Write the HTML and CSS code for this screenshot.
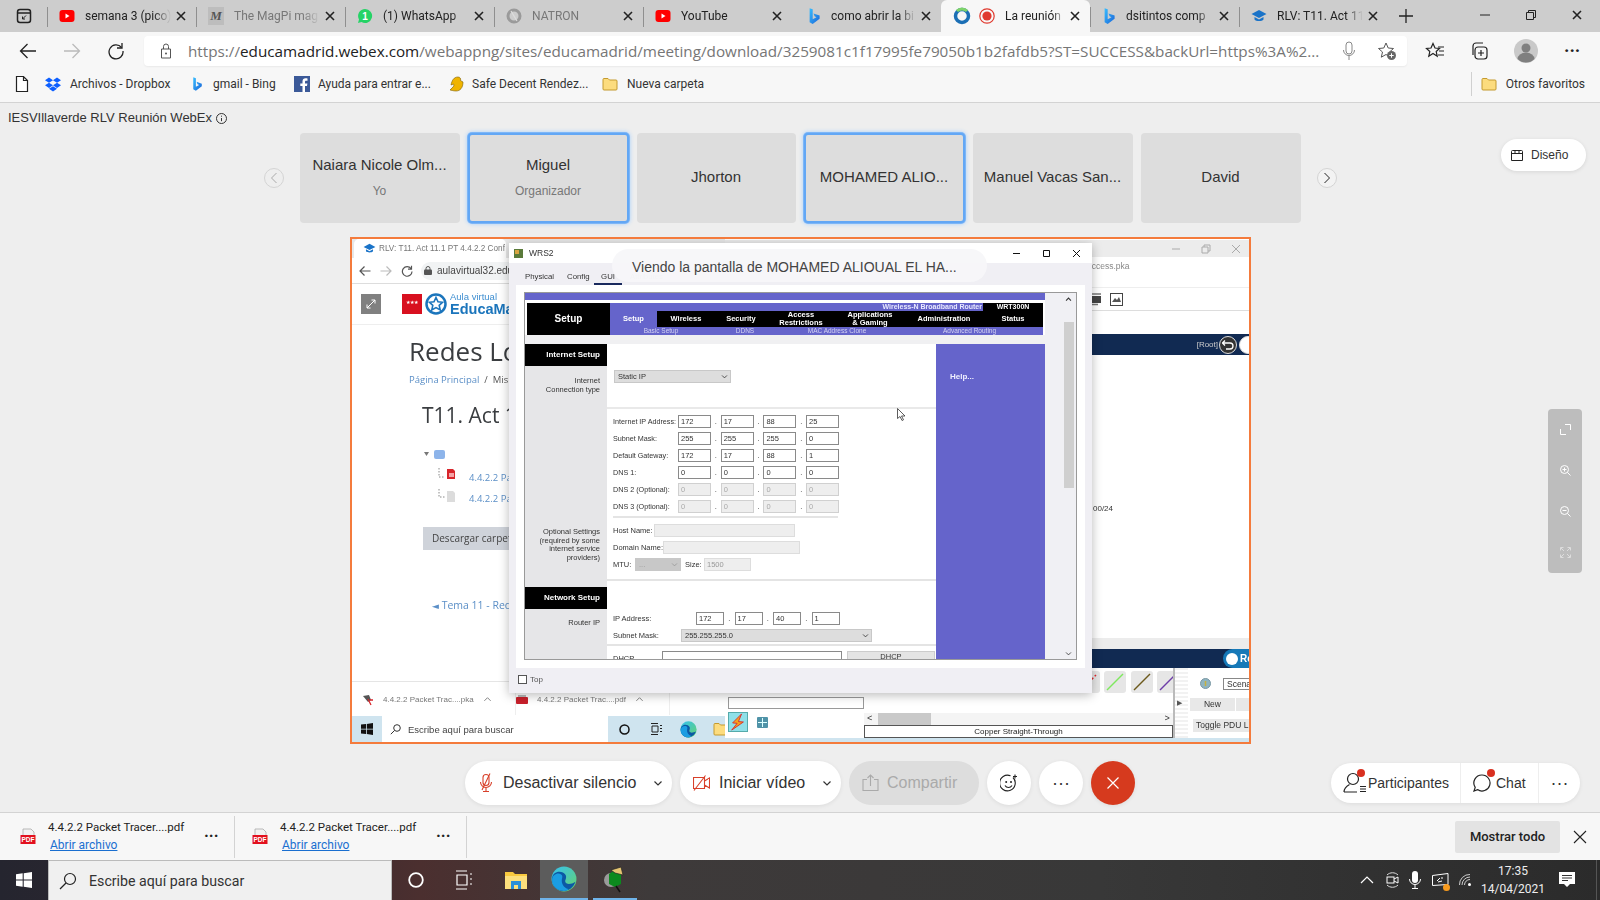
FILE: index.html
```html
<!DOCTYPE html>
<html lang="es">
<head>
<meta charset="utf-8">
<title>La reunión</title>
<link rel="stylesheet" href="styles.css">
</head>
<body>
<svg class="defs" width="0" height="0">
  <defs>
    <symbol id="x" viewBox="0 0 12 12"><path d="M2 2l8 8M10 2l-8 8" fill="none" stroke="currentColor" stroke-width="1.6"/></symbol>
    <symbol id="yt" viewBox="0 0 16 16"><rect x="0.5" y="2" width="15" height="12" rx="3" fill="#f00"/><path d="M6.5 5.5v5l4-2.5z" fill="#fff"/></symbol>
    <symbol id="bing" viewBox="0 0 16 18"><defs><linearGradient id="bg" x1="0" y1="0" x2="1" y2="1"><stop offset="0" stop-color="#37bdff"/><stop offset="1" stop-color="#1b66d8"/></linearGradient></defs><path d="M3 0l3.500 1.300v11.500l4.300-2.500-2.100-1-1.300-3.300 7 2.500v3.600L6.500 18 3 16z" fill="url(#bg)"/></symbol>
    <symbol id="folder" viewBox="0 0 16 16"><path d="M1 3.500a1 1 0 011-1h4l1.500 1.500H14a1 1 0 011 1V13a1 1 0 01-1 1H2a1 1 0 01-1-1z" fill="#fcdc7e" stroke="#c49a2e"/></symbol>
    <symbol id="pdf" viewBox="0 0 16 18"><path d="M3 1h8l3 3v4H3z" fill="#f2f2f2" stroke="#aaa" stroke-width=".8"/><rect x="0.500" y="7" width="15" height="9" fill="#e2101e"/><text x="8" y="14" font-size="6.500" font-weight="700" text-anchor="middle" fill="#fff" font-family="Liberation Sans">PDF</text></symbol>
    <symbol id="chev" viewBox="0 0 10 10"><path d="M1.500 3.500L5 7l3.500-3.500" fill="none" stroke="currentColor" stroke-width="1.200"/></symbol>
    <symbol id="cap" viewBox="0 0 16 14"><path d="M8 1L0.500 5 8 9l7.500-4z" fill="#1a73c8"/><path d="M3.500 8v2.500C5 12.500 11 12.500 12.500 10.500V8L8 10.500z" fill="#1a73c8"/></symbol>
    <symbol id="edge" viewBox="0 0 24 24"><defs><linearGradient id="eg1" x1="0" y1="0" x2="1" y2="1"><stop offset="0" stop-color="#35c1f1"/><stop offset="1" stop-color="#66d36e"/></linearGradient></defs><circle cx="12" cy="12" r="11.500" fill="url(#eg1)"/><path d="M1 12C1 6 7 4 11 6c3 1.500 3.500 4 2.500 6.500-1 2 0 4 3 4 2 0 4-.5 6-2-1.500 5-6 8.500-11 8.500C5 23 1 18 1 12z" fill="#0c59a4"/><path d="M1 13c0-5 5-7 8-5.500 2 1 1.500 3 1 5-.5 3.500 1.500 7.500 6 8.800C14.800 22.700 13.500 23 12 23 5 23 1 18 1 13z" fill="#1b9de2"/></symbol>
  </defs>
</svg>

<header class="tabstrip">
  <div class="tabs-switch">
    <svg width="16" height="16" viewBox="0 0 16 16"><rect x="1.500" y="1.500" width="13" height="13" rx="2.500" fill="none" stroke="#222" stroke-width="1.500"/><path d="M1.500 5h13" stroke="#222" stroke-width="1.500"/><path d="M10 7.500L6.500 11m0-2.500V11H9" fill="none" stroke="#222"/></svg>
  </div>
  <div class="tab sep"><svg class="fav" width="16" height="16"><use href="#yt"/></svg><span class="tab-text">semana 3 (pico)</span><svg class="tab-x" width="12" height="12"><use href="#x"/></svg></div>
  <div class="tab sep"><span class="fav fav-m">M</span><span class="tab-text muted">The MagPi mag</span><svg class="tab-x" width="12" height="12"><use href="#x"/></svg></div>
  <div class="tab sep"><svg class="fav" width="16" height="16" viewBox="0 0 16 16"><path d="M8 1a7 7 0 00-6 10.500L1 15l3.500-1A7 7 0 108 1z" fill="#25d366"/><text x="8" y="12" font-size="10" font-weight="700" text-anchor="middle" fill="#fff" font-family="Liberation Sans">1</text></svg><span class="tab-text">(1) WhatsApp</span><svg class="tab-x" width="12" height="12"><use href="#x"/></svg></div>
  <div class="tab sep"><svg class="fav" width="16" height="16" viewBox="0 0 16 16"><circle cx="8" cy="8" r="6" fill="none" stroke="#9a9a9a" stroke-width="3"/><path d="M5 3l6 10" stroke="#ddd" stroke-width="1.200"/></svg><span class="tab-text muted">NATRON</span><svg class="tab-x" width="12" height="12"><use href="#x"/></svg></div>
  <div class="tab sep"><svg class="fav" width="16" height="16"><use href="#yt"/></svg><span class="tab-text">YouTube</span><svg class="tab-x" width="12" height="12"><use href="#x"/></svg></div>
  <div class="tab"><svg class="fav" width="14" height="16"><use href="#bing"/></svg><span class="tab-text">como abrir la bi</span><svg class="tab-x" width="12" height="12"><use href="#x"/></svg></div>
  <div class="tab active">
    <svg class="fav fav-wx" width="18" height="18" viewBox="0 0 18 18"><circle cx="9" cy="9" r="6.500" fill="none" stroke="#1b6fb5" stroke-width="3.500"/><path d="M4 4a7 7 0 0110 0" fill="none" stroke="#7ed36a" stroke-width="3"/></svg>
    <svg class="fav" width="16" height="16" viewBox="0 0 16 16"><circle cx="8" cy="8" r="7.200" fill="none" stroke="#e0392e" stroke-width="1.200"/><circle cx="8" cy="8" r="4.600" fill="#e0392e"/></svg>
    <span class="tab-text">La reunión</span><svg class="tab-x" width="12" height="12"><use href="#x"/></svg>
  </div>
  <div class="tab sep"><svg class="fav" width="14" height="16"><use href="#bing"/></svg><span class="tab-text">dsitintos comp</span><svg class="tab-x" width="12" height="12"><use href="#x"/></svg></div>
  <div class="tab sep"><svg class="fav" width="16" height="14"><use href="#cap"/></svg><span class="tab-text">RLV: T11. Act 11</span><svg class="tab-x" width="12" height="12"><use href="#x"/></svg></div>
  <svg class="newtab" width="16" height="16" viewBox="0 0 16 16"><path d="M8 1v14M1 8h14" stroke="#222" stroke-width="1.300"/></svg>
  <div class="winctl">
    <svg width="12" height="12" viewBox="0 0 12 12"><path d="M1 6h10" stroke="#222"/></svg>
    <svg width="12" height="12" viewBox="0 0 12 12"><path d="M1.500 3.500h7v7h-7zM3.500 3.500v-2h7v7h-2" fill="none" stroke="#222"/></svg>
    <svg class="winctl-x" width="12" height="12"><use href="#x"/></svg>
  </div>
</header>

<nav class="toolbar">
  <svg class="tb-back" width="18" height="18" viewBox="0 0 18 18"><path d="M17 9H1.500M8.500 2L1.500 9l7 7" fill="none" stroke="#222" stroke-width="1.300"/></svg>
  <svg class="tb-fwd" width="18" height="18" viewBox="0 0 18 18"><path d="M1 9h15.500M9.500 2l7 7-7 7" fill="none" stroke="#bbb" stroke-width="1.300"/></svg>
  <svg class="tb-reload" width="18" height="18" viewBox="0 0 18 18"><path d="M14.500 5.500A7 7 0 1016 9" fill="none" stroke="#222" stroke-width="1.300"/><path d="M15 1v5h-5" fill="none" stroke="#222" stroke-width="1.300"/></svg>
  <div class="omni">
    <svg class="lock" width="12" height="16" viewBox="0 0 12 16"><path d="M3.500 6V3.500a2.500 2.500 0 015 0V6M1.500 6h9v9h-9z" fill="none" stroke="#555"/><circle cx="6" cy="10.500" r="1" fill="#555"/></svg>
    <div class="url"><span class="url-g">https://</span><span class="url-d">educamadrid.webex.com</span><span class="url-g">/webappng/sites/educamadrid/meeting/download/3259081c1f17995fe79050b1b2fafdb5?ST=SUCCESS&amp;backUrl=https%3A%2...</span></div>
    <svg class="omni-mic" width="14" height="20" viewBox="0 0 14 20"><rect x="4" y="1" width="6" height="12" rx="3" fill="none" stroke="#888"/><path d="M1.500 9a5.500 5.500 0 0011 0M7 14.500V19" fill="none" stroke="#888"/></svg>
    <svg class="omni-star" width="20" height="20" viewBox="0 0 20 20"><path d="M9 2l2.200 5 5.300.5-4 3.500 1.200 5.200L9 13.500l-4.700 2.700L5.500 11l-4-3.500L6.800 7z" fill="none" stroke="#555"/><circle cx="14.500" cy="14.500" r="4.500" fill="#666"/><path d="M14.500 12.300v4.400M12.300 14.500h4.400" stroke="#fff"/></svg>
  </div>
  <svg class="tb-fav" width="20" height="20" viewBox="0 0 20 20"><path d="M8 2.500l2 4.500 4.500.5-3.300 3 1 4.800L8 12.500l-4.200 2.800 1-4.800-3.300-3L6 7z" fill="none" stroke="#222" stroke-width="1.200"/><path d="M13 6h6M14 10h5M13 14h6" stroke="#222" stroke-width="1.200"/></svg>
  <svg class="tb-col" width="20" height="20" viewBox="0 0 20 20"><rect x="6" y="6" width="12" height="12" rx="3" fill="none" stroke="#222" stroke-width="1.200"/><path d="M12 9v6M9 12h6" stroke="#222" stroke-width="1.200"/><path d="M4 14V5a3 3 0 013-3h7" fill="none" stroke="#222" stroke-width="1.200"/></svg>
  <svg class="tb-avatar" width="24" height="24" viewBox="0 0 24 24"><circle cx="12" cy="12" r="12" fill="#c9c9c9"/><circle cx="12" cy="9" r="4.500" fill="#7f7f7f"/><path d="M3.500 20a8.500 6.500 0 0117 0 12 12 0 01-17 0z" fill="#7f7f7f"/></svg>
  <span class="tb-dots">···</span>
</nav>

<nav class="bookmarks">
  <svg class="bm-doc" width="14" height="18" viewBox="0 0 14 18"><path d="M1.500 1.500h7l4 4v11h-11zM8.500 1.500v4h4" fill="#fff" stroke="#222" stroke-width="1.200"/></svg>
  <div class="bm bm-1"><svg width="16" height="15" viewBox="0 0 16 15"><path d="M4 0.500L0 3.200l4 2.600 4-2.600zM12 0.500L8 3.200l4 2.600 4-2.600zM0 8.300l4 2.600 4-2.600-4-2.500zM12 5.800L8 8.300l4 2.600 4-2.600zM4 11.800l4 2.700 4-2.700-4-2.600z" fill="#0d5fff"/></svg><span>Archivos - Dropbox</span></div>
  <div class="bm bm-2"><svg width="12" height="16"><use href="#bing"/></svg><span>gmail - Bing</span></div>
  <div class="bm bm-3"><svg width="16" height="16" viewBox="0 0 16 16"><rect width="16" height="16" fill="#3b5998"/><path d="M11 16v-6h2l.4-2.500H11V6c0-.8.300-1.200 1.200-1.200h1.300V2.500C13 2.400 12.300 2.300 11.600 2.300 9.700 2.300 8.500 3.400 8.500 5.500v2H6.300V10h2.200v6z" fill="#fff"/></svg><span>Ayuda para entrar e...</span></div>
  <div class="bm bm-4"><svg width="16" height="16" viewBox="0 0 16 16"><path d="M9 1c2 0 3 1.500 2.500 3.500L14 6c0 6-3 9-7 9-3 0-5-1-6-1l3-3c1-1 1-2 .5-3L2 9c1-5 3-8 7-8z" fill="#f0b400" stroke="#7a5c00" stroke-width=".6"/></svg><span>Safe Decent Rendez...</span></div>
  <div class="bm bm-5"><svg width="16" height="16"><use href="#folder"/></svg><span>Nueva carpeta</span></div>
  <div class="bm bm-other"><svg width="16" height="16"><use href="#folder"/></svg><span>Otros favoritos</span></div>
</nav>

<main class="main">
  <div class="meeting-title">IESVIllaverde RLV Reunión WebEx
    <svg width="11" height="11" viewBox="0 0 11 11"><circle cx="5.500" cy="5.500" r="5" fill="none" stroke="#333"/><path d="M5.500 5v3.200M5.500 2.700v1" stroke="#333"/></svg>
  </div>

  <section class="strip">
    <button class="arrow arrow-off"><svg width="8" height="12" viewBox="0 0 8 12"><path d="M6.500 1L1.500 6l5 5" fill="none" stroke="#aaa"/></svg></button>
    <div class="cards">
      <div class="card"><div class="card-name">Naiara Nicole Olm...</div><div class="card-role">Yo</div></div>
      <div class="card card-on"><div class="card-name">Miguel</div><div class="card-role">Organizador</div></div>
      <div class="card"><div class="card-name">Jhorton</div></div>
      <div class="card card-on"><div class="card-name">MOHAMED ALIO...</div></div>
      <div class="card"><div class="card-name">Manuel Vacas San...</div></div>
      <div class="card"><div class="card-name">David</div></div>
    </div>
    <button class="arrow"><svg width="8" height="12" viewBox="0 0 8 12"><path d="M1.500 1l5 5-5 5" fill="none" stroke="#222"/></svg></button>
  </section>

  <button class="layout-btn"><svg width="12" height="12" viewBox="0 0 12 12"><path d="M.5 2.500a1 1 0 011-1h9a1 1 0 011 1v9h-11zM.5 4.500h11M4 1.500v3M8 1.500v3" fill="none" stroke="#222"/></svg><span>Diseño</span></button>

  <section class="share">
    <div class="canvas">
      <!-- remote browser -->
      <div class="cw">
        <div class="cw-tabs"><div class="cw-tab"><svg width="13" height="11"><use href="#cap"/></svg><span>RLV: T11. Act 11.1 PT 4.4.2.2 Conf</span></div></div>
        <div class="cw-bar">
          <svg width="12" height="12" viewBox="0 0 12 12"><path d="M11.500 6H1M5.500 1.500L1 6l4.500 4.500" fill="none" stroke="#555" stroke-width="1.200"/></svg>
          <svg width="12" height="12" viewBox="0 0 12 12"><path d="M.5 6H11M6.500 1.500L11 6l-4.500 4.500" fill="none" stroke="#bbb" stroke-width="1.200"/></svg>
          <svg width="12" height="12" viewBox="0 0 12 12"><path d="M10 3.500A4.800 4.800 0 1011 6.500M10.500 .8v3.400H7" fill="none" stroke="#555" stroke-width="1.200"/></svg>
          <div class="cw-omni"><svg width="8" height="9" viewBox="0 0 8 9"><rect y="3.500" width="8" height="5.500" rx="1" fill="#555"/><path d="M2 4V2.500a2 2 0 014 0V4" fill="none" stroke="#555"/></svg><span>aulavirtual32.educa.madrid.org</span></div>
        </div>
        <div class="site-bar">
          <div class="expand"><svg width="10" height="10" viewBox="0 0 10 10"><path d="M1 9l8-8M5.500 1H9v3.500M1 5.500V9h3.500" fill="none" stroke="#fff"/></svg></div>
          <div class="cm-flag"><span>★★★</span></div>
          <svg class="aula-logo" width="22" height="22" viewBox="0 0 22 22"><circle cx="11" cy="11" r="9.500" fill="none" stroke="#1b75bc" stroke-width="2.500"/><path d="M11 4.500l2 4.300 4.500.5-3.300 3 1 4.700-4.200-2.400-4.200 2.400 1-4.700-3.300-3 4.500-.5z" fill="none" stroke="#1b75bc" stroke-width="1.600"/></svg>
          <div class="aula-txt"><span class="aula-a">Aula virtual</span><span class="aula-b">EducaMadrid</span></div>
        </div>
        <div class="site-body">
          <h1 class="site-h1">Redes Locales</h1>
          <div class="crumbs"><span class="link">Página Principal</span> &nbsp;/&nbsp; Mis cursos</div>
          <h2 class="site-h2">T11. Act 11.1 PT</h2>
          <div class="tree-root">
            <svg width="8" height="6" viewBox="0 0 8 6"><path d="M1 1h5L3.500 5z" fill="#777"/></svg>
            <svg width="11" height="9" viewBox="0 0 11 9"><rect width="11" height="9" rx="2" fill="#8db4ea"/></svg>
          </div>
          <div class="tree-file"><svg width="22" height="18" viewBox="0 0 22 18"><path d="M1 0v9h6" fill="none" stroke="#888" stroke-dasharray="1.500 1.500"/><path d="M9 1h6l2 2v8H9z" fill="#d8262c"/><rect x="11" y="5" width="5" height="4" fill="#f4a5a8"/></svg><span class="link">4.4.2.2 Packet Tracer - .pka</span></div>
          <div class="tree-file tree-2"><svg width="22" height="18" viewBox="0 0 22 18"><path d="M1 0v8h6" fill="none" stroke="#888" stroke-dasharray="1.500 1.500"/><path d="M9 2h6l2 2v9H9z" fill="#dcdcdc"/></svg><span class="link">4.4.2.2 Packet Tracer - .pdf</span></div>
          <div class="dl-folder">Descargar carpeta</div>
          <div class="back-link link"><span class="back-arrow">◄</span> Tema 11 - Redes inalámbricas</div>
        </div>
        <div class="cw-dl">
          <div class="cw-dl-item">
            <svg width="12" height="12" viewBox="0 0 12 12"><path d="M1 2l6-1 2 5-3 2z" fill="#555"/><path d="M6 5l3 6M8 6h3" stroke="#d8262c" stroke-width="1.300"/></svg>
            <span>4.4.2.2 Packet Trac....pka</span><svg width="9" height="9" viewBox="0 0 10 10"><path d="M1.500 6.500L5 3l3.500 3.500" fill="none" stroke="#777"/></svg>
          </div>
          <div class="cw-dl-item">
            <svg width="12" height="12" viewBox="0 0 12 12"><rect y="3" width="12" height="7" rx="1" fill="#c8202b"/><rect x="2" y="1" width="8" height="2" fill="#bbb"/></svg>
            <span>4.4.2.2 Packet Trac....pdf</span><svg width="9" height="9" viewBox="0 0 10 10"><path d="M1.500 6.500L5 3l3.500 3.500" fill="none" stroke="#777"/></svg>
          </div>
        </div>
      </div>

      <!-- remote taskbar -->
      <div class="rtask">
        <div class="rtask-start"><svg width="12" height="12" viewBox="0 0 12 12"><path d="M0 1.600L5 1v4.700H0zM5.800.9L12 0v5.700H5.800zM0 6.400h5v4.700l-5-.7zM5.800 6.400H12V12l-6.200-.9z" fill="#111"/></svg></div>
        <div class="rtask-search"><svg width="11" height="11" viewBox="0 0 11 11"><circle cx="7" cy="4" r="3.300" fill="none" stroke="#333"/><path d="M4.500 6.500L.8 10.200" stroke="#333"/></svg><span>Escribe aquí para buscar</span></div>
        <div class="rtask-i"><svg width="11" height="11" viewBox="0 0 11 11"><circle cx="5.500" cy="5.500" r="4.500" fill="none" stroke="#111" stroke-width="1.500"/></svg></div>
        <div class="rtask-i"><svg width="11" height="12" viewBox="0 0 11 12"><path d="M0 .5h7M0 11.500h7M1 3h6v6H1zM9 2.500h2M9 5.500h2M9 8.500h2" fill="none" stroke="#222"/></svg></div>
        <div class="rtask-i"><svg width="17" height="17"><use href="#edge"/></svg></div>
        <div class="rtask-i rtask-folder"><svg width="16" height="16"><use href="#folder"/></svg></div>
      </div>

      <!-- remote packet tracer -->
      <div class="pt">
        <div class="pt-title"><svg width="10" height="10" viewBox="0 0 10 10"><path d="M1 5h8" stroke="#aaa"/></svg><svg width="10" height="10" viewBox="0 0 10 10"><path d="M1 3h6v6H1zM3 3V1h6v6H7" fill="none" stroke="#aaa"/></svg><svg width="10" height="10" viewBox="0 0 10 10"><path d="M1 1l8 8M9 1L1 9" stroke="#aaa"/></svg></div>
        <div class="pt-file"><span>Access.pka</span></div>
        <div class="pt-tools">
          <svg width="13" height="13" viewBox="0 0 13 13"><rect y="3" width="13" height="7" fill="#444"/><path d="M3 1h10M3 11.500h7" stroke="#777" stroke-width="1.500"/></svg>
          <svg width="13" height="13" viewBox="0 0 13 13"><rect x=".5" y=".5" width="12" height="12" fill="#fff" stroke="#444"/><path d="M2 9l3-4 2 2 2-3 2 5z" fill="#555"/></svg>
        </div>
        <div class="pt-gap"></div>
        <div class="pt-nav"><span>[Root]</span><i class="pt-circle"><svg width="12" height="10" viewBox="0 0 12 10"><path d="M3 .5L.5 3 3 5.500M.5 3H8a2.700 2.700 0 010 6H4" fill="none" stroke="#fff" stroke-width="1.300"/></svg></i><i class="pt-circle pt-cloud"></i></div>
        <div class="pt-work"><span>00/24</span></div>
        <div class="pt-band"></div>
        <div class="pt-nav2"><div class="rt-pill"><i></i><span>Re</span></div></div>
        <div class="pt-bottom">
          <div class="pt-left">
            <div class="pt-field"></div>
            <div class="pt-sub"><div class="bolt"><svg width="18" height="18" viewBox="0 0 20 20"><path d="M14 1L4 11l5 .5L3 19l13-9-5.500-.5z" fill="#f6a21a" stroke="#d8262c"/></svg></div><svg width="11" height="11" viewBox="0 0 11 11"><rect width="11" height="11" rx="1" fill="#4f93a8"/><path d="M5.500 1v9M1 5.500h9" stroke="#dff"/></svg></div>
          </div>
          <div class="pt-mid">
            <div class="cables">
              <i class="cb"></i><i class="cb"></i><i class="cb"></i><i class="cb"></i><i class="cb"></i><i class="cb"></i><i class="cb"></i><i class="cb"></i>
              <i class="cb"><svg width="22" height="22" viewBox="0 0 22 22"><path d="M4 18L18 4" stroke="#e0282e" stroke-width="1.500" stroke-dasharray="4 2"/></svg></i>
              <i class="cb"><svg width="22" height="22" viewBox="0 0 22 22"><path d="M3 19L19 3" stroke="#7fe85f" stroke-width="1.500"/></svg></i>
              <i class="cb"><svg width="22" height="22" viewBox="0 0 22 22"><path d="M3 19L19 3" stroke="#6d5a1c" stroke-width="1.500"/></svg></i>
              <i class="cb"><svg width="22" height="22" viewBox="0 0 22 22"><path d="M3 19L19 3" stroke="#6e3ea8" stroke-width="1.500"/></svg></i>
            </div>
            <div class="hscroll"><span class="hs-l">&lt;</span><i></i><span class="hs-r">&gt;</span></div>
            <div class="cable-name">Copper Straight-Through</div>
          </div>
          <div class="pt-handle"><span>▶</span></div>
          <div class="pt-right">
            <div class="scen"><svg width="11" height="11" viewBox="0 0 11 11"><circle cx="5.500" cy="5.500" r="5" fill="#8fb4c0" stroke="#7a97a3"/><path d="M5.500 3v5" stroke="#c9b13c" stroke-width="1.500"/></svg><span class="scen-sel">Scena</span></div>
            <div class="scen-btns"><span>New</span><span></span></div>
            <div class="toggle">Toggle PDU List</div>
          </div>
        </div>
      </div>

      <!-- remote device window -->
      <div class="rw">
        <div class="rw-title">
          <svg width="9" height="9" viewBox="0 0 9 9"><rect width="9" height="9" fill="#5a7a3a"/><path d="M1 1h4v4H1z" fill="#d9a441"/></svg><span class="rw-name">WRS2</span>
          <div class="rw-ctl"><svg width="9" height="9" viewBox="0 0 9 9"><path d="M1 4.500h7" stroke="#111"/></svg><svg width="9" height="9" viewBox="0 0 9 9"><path d="M1.500 1.500h6v6h-6z" fill="none" stroke="#111"/></svg><svg width="9" height="9" viewBox="0 0 9 9"><path d="M1 1l7 7M8 1L1 8" stroke="#111"/></svg></div>
        </div>
        <div class="rw-tabs"><span class="rw-phys">Physical</span><span class="rw-conf">Config</span><span class="rw-gui">GUI</span><span class="rw-off">Attributes</span></div>
        <div class="rw-panel">
          <div class="frame">
            <div class="page">
              <div class="pg-top"></div>
              <div class="hdr">
                <div class="hdr-title">Setup</div>
                <div class="hdr-right">
                  <div class="hdr-line"><span class="hdr-prod">Wireless-N Broadband Router</span><span class="hdr-model">WRT300N</span></div>
                  <div class="hdr-nav">
                    <span class="n-setup">Setup</span><span class="n-a">Wireless</span><span class="n-b">Security</span><span class="n-c">Access<br>Restrictions</span><span class="n-d">Applications<br>&amp; Gaming</span><span class="n-e">Administration</span><span class="n-f">Status</span>
                  </div>
                  <div class="hdr-sub"><span class="s-a">Basic Setup</span><span class="s-b">DDNS</span><span class="s-c">MAC Address Clone</span><span class="s-d">Advanced Routing</span></div>
                </div>
              </div>
              <div class="pg-band"></div>
              <div class="pg-body">
                <div class="pg-left">
                  <div class="sec">Internet Setup</div>
                  <div class="lb-a">Internet<br>Connection type</div>
                  <div class="lb-b">Optional Settings<br>(required by some<br>internet service<br>providers)</div>
                  <div class="sec">Network Setup</div>
                  <div class="lb-c">Router IP</div>
                </div>
                <div class="pg-main">
                  <div class="blk-conn"><div class="sel sel-conn">Static IP<svg width="7" height="7"><use href="#chev"/></svg></div></div>
                  <div class="ips">
                    <div class="row"><label>Internet IP Address:</label><span class="in">172</span><b>.</b><span class="in">17</span><b>.</b><span class="in">88</span><b>.</b><span class="in">25</span></div>
                    <div class="row"><label>Subnet Mask:</label><span class="in">255</span><b>.</b><span class="in">255</span><b>.</b><span class="in">255</span><b>.</b><span class="in">0</span></div>
                    <div class="row"><label>Default Gateway:</label><span class="in">172</span><b>.</b><span class="in">17</span><b>.</b><span class="in">88</span><b>.</b><span class="in">1</span></div>
                    <div class="row"><label>DNS 1:</label><span class="in">0</span><b>.</b><span class="in">0</span><b>.</b><span class="in">0</span><b>.</b><span class="in">0</span></div>
                    <div class="row off"><label>DNS 2 (Optional):</label><span class="in">0</span><b>.</b><span class="in">0</span><b>.</b><span class="in">0</span><b>.</b><span class="in">0</span></div>
                    <div class="row off"><label>DNS 3 (Optional):</label><span class="in">0</span><b>.</b><span class="in">0</span><b>.</b><span class="in">0</span><b>.</b><span class="in">0</span></div>
                  </div>
                  <div class="rule rule-a"></div>
                  <div class="opt">
                    <div class="row2"><label class="lb-host">Host Name:</label><span class="in in-host"></span></div>
                    <div class="row2"><label class="lb-dom">Domain Name:</label><span class="in in-dom"></span></div>
                    <div class="row2"><label class="lb-mtu">MTU:</label><span class="sel sel-mtu">...<svg width="7" height="7"><use href="#chev"/></svg></span><label class="lb-size">Size:</label><span class="in in-size">1500</span></div>
                  </div>
                  <div class="rule rule-b"></div>
                  <div class="rip">
                    <div class="row3"><label>IP Address:</label><span class="in">172</span><b>.</b><span class="in">17</span><b>.</b><span class="in">40</span><b>.</b><span class="in">1</span></div>
                    <div class="row4"><label>Subnet Mask:</label><span class="sel sel-mask">255.255.255.0<svg width="7" height="7"><use href="#chev"/></svg></span></div>
                  </div>
                  <div class="rule rule-c"></div>
                  <div class="dhcp"><label>DHCP</label><span class="in in-dhcp"></span><span class="btn-dhcp">DHCP</span></div>
                  <svg class="cursor" width="9" height="13" viewBox="0 0 9 13"><path d="M.5.500v10l2.500-2 2 4 1.500-.7-2-3.800h3.500z" fill="#fff" stroke="#333" stroke-width=".8"/></svg>
                </div>
                <div class="pg-help">Help...</div>
              </div>
            </div>
            <div class="vs">
              <svg width="7" height="7" viewBox="0 0 10 10"><path d="M1.500 6.500L5 3l3.500 3.500" fill="none" stroke="#333" stroke-width="1.500"/></svg>
              <i></i>
              <svg class="vs-down" width="7" height="7"><use href="#chev"/></svg>
            </div>
          </div>
        </div>
        <div class="rw-foot"><i></i><span>Top</span></div>
      </div>
    </div>
    <div class="viewing">Viendo la pantalla de MOHAMED ALIOUAL EL HA...</div>
  </section>

  <div class="zoom-rail">
    <svg width="11" height="11" viewBox="0 0 11 11"><path d="M.5 5v5.500H6M5 .5h5.500V6" fill="none" stroke="#fff"/></svg>
    <svg width="11" height="11" viewBox="0 0 11 11"><circle cx="4.500" cy="4.500" r="4" fill="none" stroke="#fff"/><path d="M4.500 2.500v4M2.500 4.500h4M7.500 7.500l3 3" stroke="#fff"/></svg>
    <svg width="11" height="11" viewBox="0 0 11 11"><circle cx="4.500" cy="4.500" r="4" fill="none" stroke="#fff"/><path d="M2.500 4.500h4M7.500 7.500l3 3" stroke="#fff"/></svg>
    <svg width="11" height="11" viewBox="0 0 11 11"><path d="M.5 3.500v-3h3M7.500.5h3v3M.5 7.500v3h3M7.500 10.500h3v-3M1 1l3 3M10 1L7 4M1 10l3-3M10 10L7 7" fill="none" stroke="#ddd"/></svg>
  </div>

  <section class="controls">
    <div></div>
    <div class="ctl-mid">
      <button class="pill pill-mute">
        <svg width="14" height="20" viewBox="0 0 14 20"><rect x="4" y="1.500" width="6" height="11" rx="3" fill="none" stroke="#d8402a" stroke-width="1.100"/><path d="M1.500 9a5.500 5.500 0 0011 0M7 15v3M4 18.500h6M11 .5L3 17" fill="none" stroke="#d8402a" stroke-width="1.100"/></svg>
        <span>Desactivar silencio</span><svg class="chev" width="10" height="10"><use href="#chev"/></svg>
      </button>
      <button class="pill pill-video">
        <svg width="17" height="16" viewBox="0 0 17 16"><path d="M.5 2.500h11v11H.5zM11.500 6l5-3v10l-5-3M12.500 .5L1 15.500" fill="none" stroke="#d8402a" stroke-width="1.100"/></svg>
        <span>Iniciar vídeo</span><svg class="chev" width="10" height="10"><use href="#chev"/></svg>
      </button>
      <button class="pill pill-share">
        <svg width="17" height="18" viewBox="0 0 17 18"><path d="M5 5.500H1v11h15v-11h-4M8.500 12V1.500M5.500 4l3-3 3 3" fill="none" stroke="#aaa" stroke-width="1.100"/></svg>
        <span>Compartir</span>
      </button>
      <button class="round">
        <svg width="18" height="18" viewBox="0 0 18 18"><path d="M13 3.500a7.800 7.800 0 11-2.500-1.700" fill="none" stroke="#222" stroke-width="1.100"/><circle cx="6.200" cy="8" r="1" fill="#222"/><circle cx="11" cy="8" r="1" fill="#222"/><path d="M5 11.500a4 4 0 007 0M15 .5v4M13 2.500h4" fill="none" stroke="#222" stroke-width="1.100"/></svg>
      </button>
      <button class="round round-dots">···</button>
      <button class="round round-end"><svg width="14" height="14" viewBox="0 0 14 14"><path d="M1.500 1.500l11 11M12.500 1.500l-11 11" stroke="#fff" stroke-width="1.200"/></svg></button>
    </div>
    <div class="side-pill">
      <div class="sp-item sp-part">
        <svg width="24" height="22" viewBox="0 0 24 22"><circle cx="10" cy="7" r="5.500" fill="none" stroke="#222" stroke-width="1.200"/><path d="M1 20c0-4 3-6 5.500-7.500M14 20H1" fill="none" stroke="#222" stroke-width="1.200"/><path d="M17 14.500h6M17 17h6M17 19.500h6" stroke="#222" stroke-width="1.200"/></svg><i class="dot dot-p"></i>
        <span>Participantes</span>
      </div>
      <div class="sp-item sp-chat">
        <svg width="18" height="18" viewBox="0 0 18 18"><path d="M9 1a8 8 0 11-4.500 14.600L1 17l1.200-3.600A8 8 0 019 1z" fill="none" stroke="#222" stroke-width="1.200"/></svg><i class="dot dot-c"></i>
        <span>Chat</span>
      </div>
      <div class="sp-item sp-more">···</div>
    </div>
  </section>
</main>

<footer class="downloads">
  <div class="dl dl-first">
    <svg width="16" height="18"><use href="#pdf"/></svg>
    <div class="dl-info"><div class="dl-name">4.4.2.2 Packet Tracer....pdf</div><a class="dl-open">Abrir archivo</a></div>
    <span class="dl-dots">···</span>
  </div>
  <div class="dl dl-second">
    <svg width="16" height="18"><use href="#pdf"/></svg>
    <div class="dl-info"><div class="dl-name">4.4.2.2 Packet Tracer....pdf</div><a class="dl-open">Abrir archivo</a></div>
    <span class="dl-dots">···</span>
  </div>
  <button class="show-all">Mostrar todo</button>
  <svg class="dl-x" width="14" height="14" viewBox="0 0 14 14"><path d="M1 1l12 12M13 1L1 13" stroke="#222" stroke-width="1.100"/></svg>
</footer>

<footer class="taskbar">
  <div class="tk-start"><svg width="16" height="16" viewBox="0 0 12 12"><path d="M0 1.600L5 1v4.700H0zM5.800.9L12 0v5.700H5.800zM0 6.400h5v4.700l-5-.7zM5.800 6.400H12V12l-6.200-.9z" fill="#fff"/></svg></div>
  <div class="tk-search"><svg width="18" height="18" viewBox="0 0 18 18"><circle cx="11" cy="7" r="5.500" fill="none" stroke="#222" stroke-width="1.200"/><path d="M7 11l-6 6" stroke="#222" stroke-width="1.200"/></svg><span>Escribe aquí para buscar</span></div>
  <div class="tk-i"><svg width="16" height="16" viewBox="0 0 16 16"><circle cx="8" cy="8" r="6.800" fill="none" stroke="#fff" stroke-width="1.800"/></svg></div>
  <div class="tk-i"><svg width="16" height="20" viewBox="0 0 16 20"><path d="M0 1h11M0 19h11M1 5h10v10H1zM14 4h2M14 9h2M14 14h2" fill="none" stroke="#fff" stroke-width="1.200"/></svg></div>
  <div class="tk-i tk-folder"><svg width="22" height="20" viewBox="0 0 22 20"><path d="M0 2h8l2 2h12v15H0z" fill="#f9c93f"/><path d="M0 6h22v13H0z" fill="#fde07d"/><rect x="6" y="11" width="10" height="8" fill="#2a8fd8"/><rect x="9" y="15" width="4" height="4" fill="#fde07d"/></svg></div>
  <div class="tk-i tk-edge"><svg width="26" height="26"><use href="#edge"/></svg></div>
  <div class="tk-i tk-app"><svg width="26" height="28" viewBox="0 0 26 28"><circle cx="9" cy="15" r="7" fill="#9a9a9a"/><path d="M7 9l6-4 6 4v10l-6 3-6-3z" fill="#0c8a1e"/><path d="M9 5l10-3 2 8-8-2z" fill="#e5c572" stroke="#222" stroke-width=".7"/><path d="M14 21l4 6" stroke="#111" stroke-width="1.500"/></svg></div>
  <div class="tray">
    <svg class="tr-up" width="14" height="8" viewBox="0 0 14 8"><path d="M1 7l6-6 6 6" fill="none" stroke="#fff" stroke-width="1.200"/></svg>
    <svg class="tr-cam" width="13" height="18" viewBox="0 0 13 18"><path d="M1 4c3-3 8-3 11 0M1 14c3 3 8 3 11 0" fill="none" stroke="#ddd"/><rect x="1" y="6" width="7" height="6" fill="none" stroke="#fff"/><path d="M8 8l4-2v6l-4-2" fill="none" stroke="#fff"/></svg>
    <svg class="tr-mic" width="12" height="18" viewBox="0 0 12 18"><rect x="3" y="0" width="6" height="12" rx="3" fill="#fff"/><path d="M.5 8a5.500 5.500 0 0011 0M6 14v3M3 17.500h6" fill="none" stroke="#fff"/></svg>
    <span class="tr-disp"><svg width="17" height="15" viewBox="0 0 17 15"><path d="M.5 2.500L16 .5v11l-15.500 1z" fill="none" stroke="#fff"/><path d="M5 8l3-3M6 9l4-1M9 5h2" stroke="#fff"/></svg><i></i></span>
    <svg class="tr-wifi" width="14" height="13" viewBox="0 0 14 13"><path d="M.5 11A10 10 0 0111 .5M3 11a8 8 0 018-8M5.500 11A5.500 5.500 0 0111 5.500" fill="none" stroke="#ccc"/><circle cx="10.500" cy="10.500" r="1.500" fill="#fff"/></svg>
    <div class="clock"><span>17:35</span><span>14/04/2021</span></div>
    <svg class="tr-note" width="16" height="16" viewBox="0 0 16 16"><path d="M0 0h16v12h-5l-3 3-3-3H0z" fill="#fff"/><path d="M3 3.500h10M3 6h10M3 8.500h6" stroke="#333"/></svg>
    <i class="tr-sep"></i>
  </div>
</footer>
</body>
</html>
```

FILE: styles.css
```css
* { box-sizing: border-box; }
html, body { margin: 0; padding: 0; }
body { width: 1600px; height: 900px; overflow: hidden; display: flex; flex-direction: column; font-family: Roboto, "Liberation Sans", sans-serif; color: #222; background: #eee; }
.defs { position: absolute; }
button { font: inherit; border: 0; padding: 0; }
svg { flex: none; display: block; }

/* browser tabs */
.tabstrip { height: 32px; background: #cdcdcd; display: flex; flex: none; }
.tabs-switch { width: 47px; display: flex; align-items: center; justify-content: center; }
.tab { width: 149px; height: 32px; display: flex; align-items: center; padding: 0 9px 0 12px; font-size: 12px; position: relative; }
.tab.sep::before { content: ""; position: absolute; left: 0; top: 7px; bottom: 5px; width: 1px; background: #8f8f8f; }
.tab:nth-child(7) { padding-left: 15px; }
.tab.active { background: #f7f7f7; border-radius: 6px 6px 0 0; padding-left: 12px; }
.fav { margin-right: 10px; }
.fav-wx { margin-right: 8px; }
.fav-m { width: 16px; height: 18px; background: #bdbdbd; font: italic 700 13px/18px "Liberation Serif", serif; text-align: center; color: #555; }
.tab-text { flex: 1; overflow: hidden; white-space: nowrap; -webkit-mask-image: linear-gradient(90deg, #000 80%, transparent); mask-image: linear-gradient(90deg, #000 80%, transparent); }
.tab-text.muted { color: #777; }
.tab-x { color: #222; margin-left: 4px; }
.newtab { margin: 8px 0 0 10px; }
.winctl { margin-left: auto; display: flex; gap: 34px; padding: 9px 17px 0 0; align-self: flex-start; }
.winctl-x { color: #222; }

/* toolbar */
.toolbar { height: 38px; background: #f7f7f7; display: flex; align-items: center; flex: none; }
.tb-back { margin-left: 19px; }
.tb-fwd { margin-left: 26px; }
.tb-reload { margin-left: 26px; }
.omni { width: 1263px; height: 30px; margin-left: 19px; background: #fff; border-radius: 4px; display: flex; align-items: center; box-shadow: 0 1px 2px rgba(0,0,0,.06); }
.lock { margin-left: 16px; }
.url { width: 1134px; margin-left: 16px; font: 15.250px "Open Sans", sans-serif; white-space: nowrap; overflow: hidden; }
.url-g { color: #767676; }
.url-d { color: #222; }
.omni-mic { margin-left: 20px; }
.omni-star { margin-left: 21px; }
.tb-fav { margin-left: 18px; }
.tb-col { margin-left: 24px; }
.tb-avatar { margin-left: 25px; }
.tb-dots { margin-left: 26px; font-size: 18px; font-weight: 700; line-height: 18px; }

/* bookmarks */
.bookmarks { height: 33px; background: #f7f7f7; border-bottom: 1px solid #d3d3d3; display: flex; align-items: center; flex: none; font-size: 12px; padding-bottom: 4px; }
.bm-doc { margin-left: 15px; margin-right: 16px; }
.bm { display: flex; align-items: center; white-space: nowrap; color: #333; flex: none; }
.bm-1 { width: 146px; gap: 9px; }
.bm-2 { width: 103px; gap: 10px; }
.bm-3 { width: 155px; gap: 8px; }
.bm-4 { width: 153px; gap: 7px; }
.bm-5 { gap: 9px; }
.bm-other { margin-left: auto; padding-left: 9px; gap: 9px; margin-right: 15px; border-left: 1px solid #d0d0d0; height: 24px; }

/* main */
.main { height: 709px; flex: none; background: #eee; position: relative; display: flex; flex-direction: column; }
.meeting-title { height: 30px; padding: 0 0 0 8px; display: flex; align-items: center; gap: 4px; font: 13px/30px "Liberation Sans", sans-serif; color: #333; }
.strip { display: flex; justify-content: center; align-items: center; height: 90px; font-family: "Liberation Sans", sans-serif; }
.arrow { width: 20px; height: 20px; border-radius: 50%; background: #f3f3f3; border: 1px solid #d4d4d4; display: flex; align-items: center; justify-content: center; }
.arrow-off { background: #eee; }
.cards { display: flex; gap: 8px; margin: 0 16px; }
.card { width: 160px; height: 90px; background: #ddd; border-radius: 4px; display: flex; flex-direction: column; align-items: center; justify-content: center; text-align: center; font-size: 15px; color: #333; padding-bottom: 3px; }
.card:nth-child(2), .card:nth-child(4) { width: 161px; }
.card:nth-child(3) { width: 159px; }
.card-on { border: 2px solid #62a7f5; box-shadow: 0 0 0 1px #7db6f7, 0 0 4px 1px #a9d0fb; }
.card-role { font-size: 12px; color: #777; margin-top: 11px; }
.layout-btn { position: absolute; left: 1501px; top: 36px; width: 85px; height: 32px; border-radius: 16px; background: #fff; box-shadow: 0 1px 4px rgba(0,0,0,.1); display: flex; align-items: center; padding-left: 10px; gap: 8px; font: 12px "Liberation Sans", sans-serif; color: #333; }

/* shared screen */
.share { width: 901px; height: 507px; margin: 14px 0 0 350px; border: 2px solid #f47b3c; position: relative; flex: none; background: #fff; }
.canvas { position: absolute; inset: 0; overflow: hidden; background: #fff; filter: blur(.35px); font-family: "Liberation Sans", sans-serif; color: #333; }
.viewing { position: absolute; left: 260px; top: 10px; width: 375px; height: 33px; border-radius: 17px; background: rgba(247,247,249,.94); font: 14px/33px "Liberation Sans", sans-serif; color: #444; padding: 2px 0 0 20px; white-space: nowrap; }

/* remote chrome */
.cw { position: absolute; left: 0; top: 0; width: 373px; height: 478px; display: flex; flex-direction: column; background: #fff; }
.cw-tabs { height: 19px; background: #e8e8e8; padding-left: 2px; flex: none; }
.cw-tab { width: 152px; height: 19px; background: #fff; border-radius: 5px 5px 0 0; display: flex; align-items: center; gap: 3px; padding-left: 9px; font-size: 8.200px; color: #777; white-space: nowrap; overflow: hidden; }
.cw-bar { height: 26px; display: flex; align-items: center; border-bottom: 1px solid #ddd; padding-left: 7px; gap: 9px; flex: none; }
.cw-omni { width: 200px; height: 18px; border-radius: 9px; background: #f1f3f4; display: flex; align-items: center; gap: 5px; padding-left: 3px; font-size: 10px; color: #444; margin-left: -1px; white-space: nowrap; }
.site-bar { height: 41px; border-bottom: 1px solid #eee; display: flex; align-items: center; padding-left: 9px; flex: none; }
.expand { width: 20px; height: 20px; background: #808080; display: flex; align-items: center; justify-content: center; }
.cm-flag { width: 20px; height: 20px; background: #d8101f; margin-left: 21px; color: #fff; font-size: 5px; line-height: 16px; text-align: center; }
.aula-logo { margin-left: 3px; }
.aula-txt { display: flex; flex-direction: column; margin-left: 3px; white-space: nowrap; line-height: 1; }
.aula-a { font-size: 9.500px; color: #3f8fd1; margin-bottom: 1px; }
.aula-b { font-size: 14.500px; font-weight: 700; color: #1b75bc; }
.site-body { padding: 10px 0 0 57px; flex: 1; font-family: "Open Sans", sans-serif; }
.link { color: #5b8fc7; }
.site-h1 { margin: 0; font-size: 26px; line-height: 32px; font-weight: 400; color: #3a3d40; white-space: nowrap; }
.crumbs { margin-top: 6px; height: 14px; font-size: 9.500px; line-height: 14px; color: #555; white-space: nowrap; }
.site-h2 { margin: 14px 0 0 13px; font-size: 21px; line-height: 28px; font-weight: 400; color: #3a3d40; white-space: nowrap; }
.tree-root { margin: 17px 0 0 14px; height: 16px; display: flex; align-items: center; gap: 3px; }
.tree-file { margin: 7px 0 0 29px; height: 16px; display: flex; align-items: center; gap: 9px; font-size: 9.500px; white-space: nowrap; position: relative; }
.tree-2 { margin-top: 5px; }
.dl-folder { margin: 21px 0 0 14px; width: 120px; height: 23px; background: #cfd3da; font-size: 10px; line-height: 23px; padding-left: 9px; color: #444; white-space: nowrap; }
.back-link { margin: 47px 0 0 23px; font-size: 10.500px; line-height: 16px; white-space: nowrap; }
.back-arrow { font-family: "DejaVu Sans", sans-serif; font-size: 9px; }
.cw-dl { height: 36px; border-top: 1px solid #e5e5e5; display: flex; align-items: center; flex: none; font-size: 8px; color: #777; padding-left: 10px; }
.cw-dl-item { display: flex; align-items: center; gap: 9px; width: 154px; height: 30px; white-space: nowrap; border-right: 1px solid #eee; flex: none; }

/* remote taskbar */
.rtask { position: absolute; left: 0; right: 0; bottom: 0; height: 26px; background: #cfe4ef; display: flex; align-items: center; }
.rtask-start { width: 30px; display: flex; justify-content: center; }
.rtask-search { width: 226px; height: 26px; background: #fff; display: flex; align-items: center; gap: 7px; padding-left: 8px; font-size: 9.500px; color: #444; white-space: nowrap; }
.rtask-i { width: 32px; display: flex; justify-content: center; }
.rtask-folder { margin-left: 1px; }

/* remote packet tracer */
.pt { position: absolute; left: 373px; top: 0; width: 526px; height: 499px; background: #fff; display: flex; flex-direction: column; }
.pt-title { height: 17px; background: #ececec; display: flex; justify-content: flex-end; align-items: center; gap: 20px; padding-right: 10px; flex: none; margin-top: 1px; }
.pt-file { height: 31px; border-bottom: 1px solid #eee; padding-left: 367px; font-size: 8.500px; color: #888; line-height: 18px; flex: none; }
.pt-file span { margin-left: -6px; }
.pt-tools { height: 23px; border-bottom: 1px solid #ddd; padding-left: 363px; display: flex; align-items: center; gap: 9px; flex: none; }
.pt-gap { height: 23px; flex: none; }
.pt-nav { height: 21px; background: #112a52; display: flex; align-items: center; justify-content: flex-end; color: #ccc; font-size: 8px; flex: none; gap: 1px; }
.pt-circle { width: 18px; height: 18px; border-radius: 50%; background: #333; border: 1.500px solid #ddd; display: flex; align-items: center; justify-content: center; flex: none; }
.pt-cloud { background: #fff; margin-right: -6px; margin-left: 1px; }
.pt-work { height: 283px; padding: 149px 0 0 368px; font-size: 8px; color: #333; flex: none; }
.pt-band { height: 11px; background: #ececec; flex: none; }
.pt-nav2 { height: 19px; background: #112a52; display: flex; justify-content: flex-end; flex: none; }
.rt-pill { width: 28px; height: 19px; background: #1679b8; border-radius: 10px 0 0 10px; display: flex; align-items: center; gap: 2px; padding-left: 3px; overflow: hidden; color: #fff; font-size: 10px; font-weight: 700; }
.rt-pill i { width: 12px; height: 12px; border-radius: 50%; background: #fff; flex: none; }
.pt-bottom { flex: 1; display: flex; background: #fff; min-height: 0; }
.pt-left { width: 139px; padding: 29px 0 0 3px; flex: none; }
.pt-field { height: 12px; border: 1px solid #999; }
.pt-sub { display: flex; align-items: center; gap: 9px; margin-top: 3px; }
.bolt { width: 20px; height: 20px; background: #8fe0e8; border: 1px solid #5aa; }
.pt-mid { width: 309px; flex: none; display: flex; flex-direction: column; }
.cables { height: 45px; display: flex; gap: 4.500px; padding: 3px 0 0 1.500px; overflow: hidden; flex: none; }
.cb { width: 22px; height: 22px; background: #e6e6e6; border-radius: 3px; flex: none; display: block; }
.hscroll { height: 12px; background: #f4f4f4; display: flex; align-items: center; font: 9px/12px "Liberation Mono", monospace; flex: none; }
.hs-l { margin-left: 3px; }
.hscroll i { width: 53px; height: 12px; background: #c9c9c9; margin-left: 6px; }
.hs-r { margin-left: auto; margin-right: 3px; }
.cable-name { height: 13px; border: 1px solid #555; text-align: center; font-size: 8px; line-height: 11px; color: #222; background: #fff; flex: none; }
.pt-handle { width: 15px; background: repeating-linear-gradient(#f2f2f2 0 2px, #fff 2px 4px); border-left: 2px solid #bbb; font-size: 7px; color: #555; padding-top: 31px; padding-left: 2px; flex: none; }
.pt-right { flex: 1; background: #fff; overflow: hidden; padding: 9px 0 0 2px; font-size: 8.500px; white-space: nowrap; min-width: 0; }
.scen { display: flex; align-items: center; gap: 12px; padding-left: 10px; height: 13px; }
.scen-sel { border: 1px solid #888; height: 12px; line-height: 10px; padding-left: 3px; width: 60px; flex: none; }
.scen-btns { display: flex; gap: 1px; margin-top: 8px; }
.scen-btns span { width: 45px; height: 13px; background: #e8e8e8; text-align: center; line-height: 13px; flex: none; }
.toggle { margin: 8px 0 0 3px; height: 13px; width: 100px; background: #e8e8e8; line-height: 13px; padding-left: 3px; }

/* remote device window */
.rw { position: absolute; left: 157px; top: 4px; width: 583px; height: 450px; background: #f0eff4; box-shadow: 0 2px 10px rgba(0,0,0,.28); display: flex; flex-direction: column; }
.rw-title { height: 20px; background: #fff; display: flex; align-items: center; padding-left: 5px; gap: 6px; font-size: 8.500px; color: #333; flex: none; }
.rw-ctl { margin-left: auto; display: flex; gap: 21px; padding-right: 11px; }
.rw-tabs { height: 22px; padding: 7px 0 0 16px; display: flex; font-size: 7.800px; line-height: 14px; color: #333; flex: none; }
.rw-tabs span { flex: none; }
.rw-phys { width: 42px; }
.rw-conf { width: 27px; }
.rw-gui { width: 28px; height: 15px; text-align: center; border-bottom: 2px solid #1a2a5e; }
.rw-off { color: #bbb; margin-left: 8px; }
.rw-panel { flex: 1; min-height: 0; margin: 0 7px; background: #fff; padding: 7px 8px 8px; }
.frame { height: 100%; border: 1px solid #999; display: flex; overflow: hidden; }
.page { width: 520px; display: flex; flex-direction: column; flex: none; background: #fff; }
.pg-top { height: 7px; background: #6564cb; flex: none; }
.hdr { margin: 3px 2px 0; width: 516px; height: 32px; display: flex; flex: none; color: #fff; font-weight: 700; }
.hdr-title { width: 83px; background: #000; font-size: 10px; line-height: 32px; text-align: center; }
.hdr-right { width: 433px; background: #6564cb; display: flex; flex-direction: column; font-size: 7px; }
.hdr-line { height: 8px; display: flex; justify-content: flex-end; align-items: center; flex: none; line-height: 8px; }
.hdr-prod { margin-right: 1px; color: #e8e8ff; }
.hdr-model { width: 60px; height: 8px; background: #000; text-align: center; }
.hdr-nav { height: 16px; display: flex; background: #000; flex: none; font-size: 7.500px; line-height: 8px; text-align: center; align-items: center; }
.hdr-nav span { display: block; flex: none; }
.n-setup { width: 47px; height: 16px; line-height: 16px; background: #6564cb; }
.n-a { width: 58px; } .n-b { width: 52px; } .n-c { width: 68px; } .n-d { width: 70px; } .n-e { width: 78px; } .n-f { width: 60px; }
.hdr-sub { height: 8px; display: flex; font-size: 6.500px; line-height: 8px; font-weight: 400; color: #d4d3f3; text-align: center; }
.hdr-sub span { flex: none; }
.s-a { width: 102px; } .s-b { width: 66px; } .s-c { width: 118px; } .s-d { width: 147px; }
.pg-band { height: 9px; background: #f0f0f2; flex: none; }
.pg-body { flex: 1; min-height: 0; display: flex; overflow: hidden; }
.pg-left { width: 82px; background: #e6e6e8; font-size: 7.500px; line-height: 8.700px; text-align: right; flex: none; }
.sec { height: 22px; background: #000; color: #fff; font-weight: 700; font-size: 8px; line-height: 22px; padding-right: 7px; }
.lb-a { height: 161px; padding: 11px 7px 0 0; }
.lb-b { height: 60px; padding: 1px 7px 0 0; }
.lb-c { padding: 10px 7px 0 0; }
.pg-main { width: 329px; position: relative; flex: none; font-size: 7.500px; overflow: hidden; color: #333; }
.pg-help { width: 109px; background: #6564cb; color: #f0f0ff; font-size: 8px; font-weight: 700; padding: 28px 0 0 14px; flex: none; }
.sel { display: flex; align-items: center; justify-content: space-between; background: #ddd; border: 1px solid #c8c8c8; padding: 0 2px 0 3px; color: #333; }
.sel-conn { width: 117px; height: 13px; margin: 0 0 0 7px; }
.blk-conn { height: 65px; padding-top: 26px; border-bottom: 2px solid #e9e9e9; }
.ips { padding: 4px 0 0 6px; height: 107px; }
.row, .row2, .row3, .row4 { height: 17px; display: flex; align-items: center; white-space: nowrap; }
.row label { width: 65px; flex: none; font-size: 7.200px; }
.in { display: block; width: 33px; height: 13px; border: 1px solid #8a8a8a; line-height: 11px; padding-left: 2px; background: #fff; flex: none; }
.row b, .row3 b { width: 9.700px; font-weight: 400; text-align: center; flex: none; }
.off .in { background: #eee; border-color: #d0d0d0; color: #aaa; }
.rule { height: 2px; background: #e4e4e4; margin-left: 6px; }
.rule-a { width: 225px; }
.opt { padding: 4px 0 0 6px; height: 61px; }
.lb-host { width: 41px; flex: none; }
.lb-dom { width: 50px; flex: none; }
.lb-mtu { width: 22px; flex: none; }
.in-host { width: 141px; background: #eee; border-color: #ddd; }
.in-dom { width: 137px; background: #eee; border-color: #ddd; }
.sel-mtu { width: 46px; height: 13px; background: #c8c8c8; color: #999; }
.lb-size { margin-left: 4px; width: 19px; flex: none; }
.in-size { width: 47px; background: #eee; border-color: #ddd; color: #999; }
.rule-b { margin-left: 0; width: 329px; }
.rip { padding: 29px 0 0 6px; }
.row3 label { width: 83px; }
.row3 .in { width: 28px; }
.row3 b { width: 10.500px; }
.row4 label { width: 68px; }
.sel-mask { width: 191px; height: 13px; background: #ddd; }
.rule-c { width: 329px; margin: 0; }
.dhcp { display: flex; padding: 5px 0 0 6px; align-items: flex-start; }
.dhcp label { width: 49px; line-height: 9px; padding-top: 3px; flex: none; }
.in-dhcp { width: 180px; height: 13px; }
.btn-dhcp { width: 88px; height: 14px; background: #e4e4e4; border: 1px solid #ccc; text-align: center; margin-left: 5px; flex: none; }
.cursor { position: absolute; left: 290px; top: 64px; }
.vs { width: 31px; background: #f0f0f4; display: flex; flex-direction: column; align-items: flex-end; padding: 3px 2px 2px 0; flex: none; }
.vs svg { margin-right: 2px; }
.vs i { display: block; width: 10px; height: 166px; background: #cfcfcf; margin-top: 19px; }
.vs-down { margin-top: auto; }
.rw-foot { height: 25px; display: flex; align-items: center; padding: 0 0 3px 9px; gap: 3px; font-size: 8px; color: #555; flex: none; }
.rw-foot i { display: block; width: 9px; height: 9px; border: 1px solid #555; background: #fff; }

/* zoom rail */
.zoom-rail { position: absolute; left: 1548px; top: 306px; width: 34px; height: 164px; background: #bdbdbd; border-radius: 4px; display: flex; flex-direction: column; align-items: center; padding-top: 15px; gap: 30px; }

/* controls */
.controls { display: grid; grid-template-columns: 1fr auto 1fr; margin-top: 17px; align-items: center; flex: none; font-family: "Liberation Sans", sans-serif; }
.ctl-mid { display: flex; gap: 8px; }
.pill { height: 44px; border-radius: 22px; background: #fff; display: flex; align-items: center; font-size: 16px; color: #333; box-shadow: 0 1px 4px rgba(0,0,0,.08); white-space: nowrap; }
.pill-mute { width: 207px; padding-left: 14px; }
.pill-mute span { margin-left: 10px; }
.pill-mute .chev { margin-left: 17px; }
.pill-video { width: 161px; padding-left: 13px; }
.pill-video span { margin-left: 9px; }
.pill-video .chev { margin-left: 17px; }
.pill-share { width: 130px; padding-left: 13px; background: #ddd; color: #aaa; box-shadow: none; }
.pill-share span { margin-left: 8px; }
.chev { color: #333; }
.round { width: 44px; height: 44px; border-radius: 50%; background: #fff; display: flex; align-items: center; justify-content: center; box-shadow: 0 1px 4px rgba(0,0,0,.08); }
.round-dots { font-size: 18px; color: #333; }
.round-end { background: #d63a1e; }
.side-pill { justify-self: end; margin-right: 20px; width: 249px; height: 40px; border-radius: 20px; background: #fff; display: flex; box-shadow: 0 1px 4px rgba(0,0,0,.08); font-size: 14px; color: #333; }
.sp-item { display: flex; align-items: center; position: relative; border-right: 1px solid #eee; }
.sp-part { width: 130px; padding-left: 12px; gap: 1px; }
.sp-chat { width: 78px; padding-left: 12px; gap: 5px; }
.sp-more { flex: 1; border: 0; justify-content: center; font-size: 18px; }
.dot { position: absolute; width: 8px; height: 8px; border-radius: 50%; background: #d9301f; top: 6px; }
.dot-p { left: 26px; }
.dot-c { left: 26px; }

/* downloads */
.downloads { height: 48px; flex: none; background: #f7f7f7; border-top: 1px solid #d3d3d3; display: flex; align-items: center; }
.dl { width: 232px; height: 42px; display: flex; align-items: center; padding-left: 20px; border-right: 1px solid #d3d3d3; position: relative; flex: none; }
.dl-first { width: 235px; }
.dl-second { padding-left: 17px; }
.dl-info { margin-left: 12px; margin-top: -2px; }
.dl-name { font-size: 11.500px; line-height: 16px; color: #222; white-space: nowrap; }
.dl-open { display: block; font-size: 12px; line-height: 16px; color: #1a6fd0; text-decoration: underline; margin: 2px 0 0 2px; }
.dl-dots { position: absolute; left: 204px; top: 10px; font-size: 16px; font-weight: 700; line-height: 20px; }
.dl-second .dl-dots { left: 201px; }
.show-all { margin-left: auto; width: 105px; height: 32px; border-radius: 2px; background: #e3e3e3; font: 500 13px Roboto, sans-serif; color: #222; }
.dl-x { margin: 0 13px 0 13px; }

/* taskbar */
.taskbar { height: 40px; flex: none; background: linear-gradient(90deg, #25252f 0, #2e2730 200px, #4b2f2f 420px, #3e3a3a 650px, #383838 1100px, #2b2b2b 1600px); display: flex; align-items: center; color: #fff; }
.tk-start { width: 48px; display: flex; justify-content: center; }
.tk-search { width: 344px; height: 40px; background: #f0f0f0; border: 1px solid #bbb; border-width: 1px 1px 0; display: flex; align-items: center; padding-left: 10px; gap: 12px; font-size: 14.200px; color: #333; }
.tk-i { width: 48px; height: 40px; display: flex; align-items: center; justify-content: center; }
.tk-folder { margin-left: 4px; }
.tk-edge { background: #5c5c5c; border-bottom: 2px solid #6fb4ea; }
.tk-app { width: 44px; margin-left: 5px; border-bottom: 2px solid #6fb4ea; }
.tray { margin-left: auto; display: flex; align-items: center; height: 40px; }
.tr-up { margin-right: 12px; }
.tr-cam { margin-right: 10px; }
.tr-mic { margin-right: 11px; }
.tr-disp { position: relative; margin-right: 10px; display: block; }
.tr-disp i { position: absolute; right: -1px; bottom: -3px; width: 7px; height: 7px; background: #f79a1d; border-radius: 50%; }
.tr-wifi { margin-right: 10px; }
.clock { width: 60px; display: flex; flex-direction: column; align-items: center; font-size: 12px; line-height: 18px; color: #eee; white-space: nowrap; }
.tr-note { margin: 0 21px 0 16px; }
.tr-sep { width: 1px; height: 40px; background: #555; margin-right: 3px; }
```
